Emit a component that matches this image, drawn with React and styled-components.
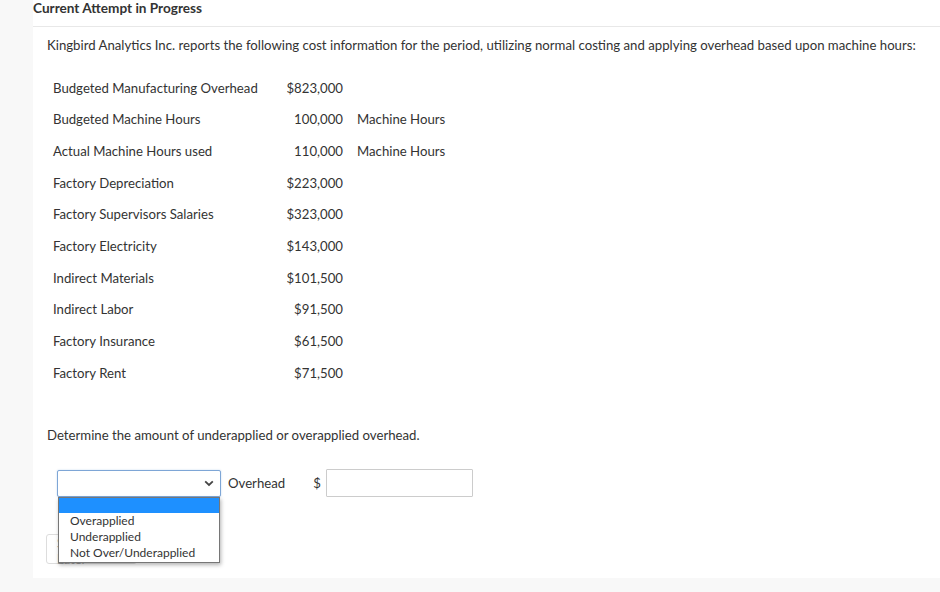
import React from "react";
import styled, { createGlobalStyle } from "styled-components";

const Global = createGlobalStyle`
  html, body { margin: 0; padding: 0; }
  body {
    background: #f8f8f8;
    font-family: Lato, "Open Sans", Arial, sans-serif;
    color: #333;
    width: 940px;
    height: 592px;
    overflow: hidden;
  }
`;

const Page = styled.div`
  padding-left: 33px;
`;

const Panel = styled.main`
  background: #fff;
  height: 578px;
  position: relative;
`;

const Header = styled.h2`
  margin: 0;
  height: 27px;
  box-sizing: border-box;
  padding-top: 1px;
  font-size: 13.6px;
  font-weight: 700;
  line-height: 15px;
  color: #333;
  border-bottom: 1px solid #e8e8e8;
`;

const Body = styled.section`
  padding: 10px 0 0 14px;
`;

const Intro = styled.p`
  margin: 0;
  font-size: 13.2px;
  line-height: 16px;
`;

const DataTable = styled.div`
  margin-top: 19px;
  display: flex;
  flex-direction: column;
`;

const Row = styled.div`
  display: grid;
  grid-template-columns: 219px 63px auto;
  column-gap: 14px;
  height: 31.67px;
  align-items: center;
  font-size: 13.2px;
  line-height: 16px;
`;

const Label = styled.span`
  padding-left: 6px;
`;

const Value = styled.span`
  text-align: right;
`;

const Unit = styled.span``;

const Question = styled.p`
  margin: 38px 0 0 0;
  font-size: 13.2px;
  line-height: 16px;
`;

const AnswerRow = styled.div`
  margin-top: 27px;
  margin-left: 10px;
  display: flex;
  align-items: flex-start;
`;

const SelectWrap = styled.div`
  position: relative;
  width: 164px;
`;

const SelectBox = styled.div`
  box-sizing: border-box;
  height: 27px;
  border: 1px solid #7ea6d6;
  border-radius: 2px;
  background: #fff;
  box-shadow: 0 0 2px rgba(80, 140, 210, 0.35);
  display: flex;
  align-items: center;
  justify-content: flex-end;
  padding-right: 6px;
`;

const DropList = styled.ul`
  position: absolute;
  top: 27px;
  left: 1px;
  width: 162px;
  box-sizing: border-box;
  margin: 0;
  padding: 0 0 1px 0;
  list-style: none;
  background: #fff;
  border: 1px solid #767676;
  box-shadow: 1px 2px 4px rgba(0, 0, 0, 0.3);
  z-index: 5;
`;

const Option = styled.li`
  height: ${(p) => (p.$blank ? "15px" : "16px")};
  line-height: 16px;
  font-size: 12px;
  padding-left: 11px;
  color: #333;
  background: ${(p) => (p.$active ? "#1e90ff" : "#fff")};
`;

const InlineText = styled.span`
  font-size: 13.2px;
  line-height: 16px;
  margin-top: 5px;
`;

const OverheadText = styled(InlineText)`
  margin-left: 7px;
`;

const Dollar = styled(InlineText)`
  margin-left: 28px;
`;

const AmountInput = styled.div`
  margin-left: 5px;
  width: 147px;
  height: 28px;
  box-sizing: border-box;
  border: 1px solid #cccccc;
  border-radius: 1px;
  margin-top: -1px;
`;

const ButtonRow = styled.div`
  margin-top: 37px;
  margin-left: -1px;
`;

const GhostButton = styled.button`
  box-sizing: border-box;
  height: 30px;
  width: 91px;
  border: 1px solid #dddddd;
  border-radius: 3px;
  background: #fff;
  color: #999;
  font-family: Lato, Arial, sans-serif;
  font-size: 13px;
  padding: 0 10px;
  text-align: left;
`;

const Chevron = () => (
  <svg width="10" height="7" viewBox="0 0 10 7">
    <path d="M1.2 1.4 L5 5 L8.8 1.4" fill="none" stroke="#444" strokeWidth="1.8" />
  </svg>
);

const rows = [
  ["Budgeted Manufacturing Overhead", "$823,000", ""],
  ["Budgeted Machine Hours", "100,000", "Machine Hours"],
  ["Actual Machine Hours used", "110,000", "Machine Hours"],
  ["Factory Depreciation", "$223,000", ""],
  ["Factory Supervisors Salaries", "$323,000", ""],
  ["Factory Electricity", "$143,000", ""],
  ["Indirect Materials", "$101,500", ""],
  ["Indirect Labor", "$91,500", ""],
  ["Factory Insurance", "$61,500", ""],
  ["Factory Rent", "$71,500", ""],
];

export default function App() {
  return (
    <>
      <Global />
      <Page>
        <Panel>
          <Header>Current Attempt in Progress</Header>
          <Body>
            <Intro>
              Kingbird Analytics Inc. reports the following cost information for the period, utilizing
              normal costing and applying overhead based upon machine hours:
            </Intro>
            <DataTable>
              {rows.map(([l, v, u]) => (
                <Row key={l}>
                  <Label>{l}</Label>
                  <Value>{v}</Value>
                  <Unit>{u}</Unit>
                </Row>
              ))}
            </DataTable>
            <Question>Determine the amount of underapplied or overapplied overhead.</Question>
            <AnswerRow>
              <SelectWrap>
                <SelectBox>
                  <Chevron />
                </SelectBox>
                <DropList>
                  <Option $active $blank />
                  <Option>Overapplied</Option>
                  <Option>Underapplied</Option>
                  <Option>Not Over/Underapplied</Option>
                </DropList>
              </SelectWrap>
              <OverheadText>Overhead</OverheadText>
              <Dollar>$</Dollar>
              <AmountInput />
            </AnswerRow>
            <ButtonRow>
              <GhostButton>Save for Later</GhostButton>
            </ButtonRow>
          </Body>
        </Panel>
      </Page>
    </>
  );
}
